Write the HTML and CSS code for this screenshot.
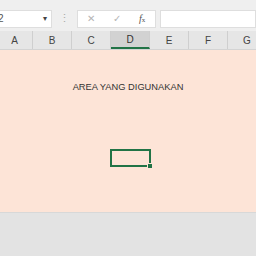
FILE: index.html
```html
<!DOCTYPE html>
<html lang="en">
<head>
  <meta charset="UTF-8" />
  <title>Sheet</title>
  <link rel="stylesheet" href="styles.css">
</head>
<body>

  <div class="formula-bar">
    <div class="name-box">
      <span class="name-val">2</span>
      <span class="caret">&#9662;</span>
    </div>
    <div class="grip">&#8942;</div>
    <div class="fx-tools">
      <span class="tool">&#10005;</span>
      <span class="tool">&#10003;</span>
      <span class="tool fx"><i>f</i><small>x</small></span>
    </div>
    <div class="formula-input"></div>
  </div>

  <div class="col-heads">
    <div class="col-head">A</div>
    <div class="col-head">B</div>
    <div class="col-head">C</div>
    <div class="col-head active">D</div>
    <div class="col-head">E</div>
    <div class="col-head">F</div>
    <div class="col-head">G</div>
  </div>

  <div class="sheet">
    <div class="area-label">AREA YANG DIGUNAKAN</div>
    <div class="cell-row">
      <div class="sel-cell"><span class="handle"></span></div>
    </div>
  </div>

  <div class="unused"></div>

</body>
</html>
```

FILE: styles.css
```css
body {
  margin: 0;
  width: 256px;
  height: 256px;
  overflow: hidden;
  font-family: 'Liberation Sans', Arial, sans-serif;
  background: #e3e3e3;
}

.formula-bar {
  display: flex;
  align-items: center;
  height: 31px;
  padding-top: 6px;
  box-sizing: border-box;
  background: #efefef;
}

.name-box {
  width: 52px;
  height: 18px;
  background: #fff;
  border: 1px solid #dedede;
  border-left: none;
  display: flex;
  align-items: center;
  justify-content: space-between;
  padding: 0 4px 0 0;
  box-sizing: border-box;
  font-size: 10px;
  color: #555;
}

.name-val {
  margin-left: -2px;
}

.caret {
  font-size: 8px;
  color: #444;
}

.grip {
  width: 25px;
  text-align: center;
  color: #aaa;
  font-size: 11px;
}

.fx-tools {
  width: 79px;
  height: 18px;
  background: #fff;
  border: 1px solid #dedede;
  display: flex;
  align-items: center;
  box-sizing: border-box;
}

.tool {
  flex: 1;
  text-align: center;
  color: #b5b5b5;
  font-size: 10px;
}

.tool.fx {
  color: #555;
  font-family: 'Liberation Serif', serif;
  font-size: 10px;
}

.tool.fx small {
  font-size: 7px;
}

.formula-input {
  flex: 1;
  height: 18px;
  margin-left: 4px;
  background: #fff;
  border: 1px solid #dedede;
  box-sizing: border-box;
}

.col-heads {
  display: grid;
  grid-template-columns: 33px repeat(6, 39px);
  height: 18px;
  background: #e6e6e6;
  border-bottom: 1px solid #d4d4d4;
}

.col-head {
  display: flex;
  align-items: center;
  justify-content: center;
  font-size: 10px;
  color: #444;
  border-right: 1px solid #cfcfcf;
}

.col-head:first-child {
  justify-content: flex-end;
  padding-right: 14px;
}

.col-head.active {
  background: #d2d2d2;
  border-bottom: 2px solid #217346;
  color: #333;
}

.sheet {
  height: 162px;
  background: #fde4d7;
  display: flex;
  flex-direction: column;
  align-items: center;
}

.area-label {
  margin-top: 32px;
  font-size: 9.3px;
  color: #333;
}

.cell-row {
  width: 100%;
  padding-left: 110px;
  margin-top: 57px;
  box-sizing: border-box;
}

.sel-cell {
  position: relative;
  width: 41px;
  height: 18px;
  border: 2px solid #217346;
  box-sizing: border-box;
}

.handle {
  position: absolute;
  right: -4px;
  bottom: -4px;
  width: 4px;
  height: 4px;
  background: #217346;
  border: 1px solid #fde4d7;
}

.unused {
  height: 45px;
  background: #e3e3e3;
  border-top: 1px solid #d8d8d8;
}
```
